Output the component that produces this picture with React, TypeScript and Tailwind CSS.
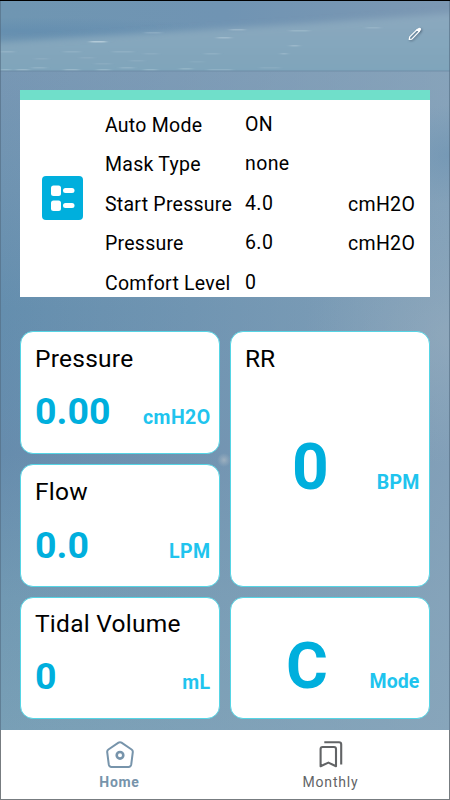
import clsx from 'clsx'

const settings = [
  { label: 'Auto Mode', value: 'ON', unit: '' },
  { label: 'Mask Type', value: 'none', unit: '' },
  { label: 'Start Pressure', value: '4.0', unit: 'cmH2O' },
  { label: 'Pressure', value: '6.0', unit: 'cmH2O' },
  { label: 'Comfort Level', value: '0', unit: '' },
]

const readings = [
  { title: 'Pressure', value: '0.00', unit: 'cmH2O', box: 'h-[123px] pt-[11px]', gap: 'mt-[15px]' },
  { title: 'Flow', value: '0.0', unit: 'LPM', box: 'h-[123px] pt-[11px]', gap: 'mt-4' },
  { title: 'Tidal Volume', value: '0', unit: 'mL', box: 'h-[122px] pt-2.5', gap: 'mt-[15px]' },
]

// x, y, width, opacity of the light streaks in the header
const streaks = [
  [90, 41, 16, 0.8], [145, 32, 16, 0.25], [230, 29, 15, 0.4], [217, 37, 14, 0.45], [290, 30, 19, 0.3],
  [366, 27, 14, 0.25], [290, 45, 9, 0.4], [281, 53, 6, 0.4], [0, 51, 14, 0.25], [64, 51, 16, 0.2],
  [113, 51, 20, 0.2], [144, 53, 14, 0.15], [205, 53, 14, 0.2], [0, 69, 11, 0.35], [16, 69, 13, 0.4],
  [32, 67, 14, 0.25], [64, 69, 15, 0.4], [97, 69, 13, 0.35], [120, 67, 14, 0.25], [144, 69, 13, 0.35],
  [180, 68, 12, 0.3], [208, 69, 24, 0.25], [260, 67, 20, 0.15], [80, 57, 14, 0.15], [130, 60, 14, 0.15],
  [35, 58, 13, 0.15], [190, 61, 14, 0.1], [95, 63, 16, 0.15],
]

function Sky() {
  return (
    <svg className="absolute inset-0 h-full w-full" viewBox="0 0 450 800" preserveAspectRatio="none" aria-hidden="true">
      <defs>
        <linearGradient id="head" x1="0" y1="0" x2="1" y2="0">
          <stop offset="0" stopColor="#6f96b2" />
          <stop offset="0.5" stopColor="#7094b3" />
          <stop offset="1" stopColor="#7c98b3" />
        </linearGradient>
        <linearGradient id="haze" x1="0" y1="0" x2="0" y2="1">
          <stop offset="0" stopColor="#8ca9bf" />
          <stop offset="1" stopColor="#7ba3b9" />
        </linearGradient>
        <linearGradient id="body" x1="0" y1="0" x2="0" y2="1">
          <stop offset="0" stopColor="#7797b4" />
          <stop offset="0.18" stopColor="#6e93b1" />
          <stop offset="0.36" stopColor="#648eae" />
          <stop offset="0.58" stopColor="#668cad" />
          <stop offset="0.8" stopColor="#7199b3" />
          <stop offset="1" stopColor="#789fb6" />
        </linearGradient>
        <linearGradient id="side" x1="0" y1="0" x2="1" y2="0">
          <stop offset="0" stopColor="#94a9bb" stopOpacity="0" />
          <stop offset="0.35" stopColor="#8ca5bb" stopOpacity="0.25" />
          <stop offset="1" stopColor="#8ea8bd" stopOpacity="0.7" />
        </linearGradient>
        <radialGradient id="glow">
          <stop offset="0" stopColor="#a2b3c1" stopOpacity="0.9" />
          <stop offset="1" stopColor="#9bafbf" stopOpacity="0" />
        </radialGradient>
        <radialGradient id="dim">
          <stop offset="0" stopColor="#618caf" stopOpacity="0.7" />
          <stop offset="1" stopColor="#618caf" stopOpacity="0" />
        </radialGradient>
        <filter id="soft" x="-10%" y="-50%" width="120%" height="200%">
          <feGaussianBlur stdDeviation="3" />
        </filter>
        <filter id="streak" x="-5%" y="-10%" width="110%" height="120%">
          <feGaussianBlur stdDeviation="2 0.5" />
        </filter>
        <clipPath id="top">
          <rect width="450" height="71" />
        </clipPath>
      </defs>
      <rect width="450" height="71" fill="url(#head)" />
      <g clipPath="url(#top)">
        <ellipse cx="20" cy="31" rx="210" ry="14" fill="url(#dim)" />
        <path d="M-20 44 L150 33 L300 24 L470 12 V90 H-20Z" fill="url(#haze)" filter="url(#soft)" />
        <g filter="url(#streak)">
          {streaks.map(([x, y, w, o], i) => (
            <rect key={i} x={x} y={y} width={w} height="1.6" rx="0.8" fill="#bed3df" opacity={o} />
          ))}
        </g>
      </g>
      <rect y="71" width="450" height="660" fill="url(#body)" />
      <rect y="71" width="450" height="660" fill="url(#side)" />
      <ellipse cx="455" cy="335" rx="150" ry="130" fill="url(#glow)" opacity="0.45" />
      <ellipse cx="450" cy="155" rx="70" ry="50" fill="url(#dim)" opacity="0.6" />
      <circle cx="224" cy="460" r="7" fill="url(#glow)" />
      <rect y="70.5" width="450" height="1" fill="#64839c" opacity="0.6" />
      <rect width="450" height="1" fill="#000" />
      <rect y="1" width="1" height="799" fill="#526b80" opacity="0.6" />
      <rect x="449" y="1" width="1" height="799" fill="#526b80" opacity="0.6" />
    </svg>
  )
}

function ListIcon() {
  return (
    <svg className="h-11 w-[41px]" viewBox="0 0 41 44" fill="none">
      <rect width="41" height="44" rx="4" fill="#00afdd" />
      <g fill="#fff">
        <rect x="9" y="9.5" width="10" height="10.5" rx="2.5" />
        <rect x="9" y="24.5" width="10" height="10.5" rx="2.5" />
        <rect x="21" y="12" width="11.5" height="5" rx="2.5" />
        <rect x="21" y="27" width="11.5" height="5" rx="2.5" />
      </g>
    </svg>
  )
}

function PencilIcon() {
  return (
    <svg className="h-4 w-4 drop-shadow-[1px_1px_1px_rgba(60,80,100,0.7)]" viewBox="0 0 16 16" fill="none">
      <path d="M2.2 13.5 2.7 10.9 10.3 3.3 12.3 5.3 4.8 13.1Z" stroke="#fff" strokeWidth="1.2" strokeLinejoin="round" />
      <path d="M9.3 3.8 11.6 2Q13 1.4 13.8 2.2T13.8 4.3L12 6.3Z" fill="#fff" />
    </svg>
  )
}

function HomeIcon() {
  return (
    <svg className="h-7 w-7" viewBox="0 0 28 28" fill="none" stroke="#7794ab" strokeWidth="2" strokeLinejoin="round">
      <path d="M12.5 1.7Q14 .7 15.5 1.7L25.6 8.5Q27 9.5 26.8 11.2L25.2 23.7Q24.8 26 22.6 26H5.4Q3.2 26 2.8 23.7L1.2 11.2Q1 9.5 2.4 8.5Z" />
      <circle cx="14" cy="14.3" r="3.3" strokeWidth="2.6" />
    </svg>
  )
}

function MonthlyIcon() {
  return (
    <svg className="h-7 w-7" viewBox="0 0 28 28" fill="none" stroke="#626466" strokeWidth="2.1" strokeLinejoin="round">
      <path d="M3.6 25.2V8Q3.6 6 5.6 6H17Q19 6 19 8V25.2L11.4 21.6Z" />
      <path d="M7.3 1.3H22Q24.2 1.3 24.2 3.5V23.5" />
    </svg>
  )
}

const card = 'rounded-[13px] border border-[#55d5e5] bg-white'

export default function App() {
  return (
    <div className="relative h-[800px] w-[450px] overflow-hidden bg-[#7095b2] font-['Roboto',sans-serif] whitespace-nowrap text-black">
      <Sky />
      <div className="relative flex h-full flex-col">
        <header className="flex h-[90px] justify-end pt-[26px] pr-[27px]">
          <PencilIcon />
        </header>

        {/* Current settings */}
        <section className="mx-5 flex h-[207px] shrink-0 overflow-hidden border-t-[10px] border-[#70dfca] bg-white">
          <div className="w-[85px] pt-[76px] pl-[22px]">
            <ListIcon />
          </div>
          <div className="pt-1.5">
            {settings.map((row) => (
              <div key={row.label} className="grid h-[39.4px] grid-cols-[140px_103px_70px] text-[19.5px] leading-10 tracking-[0.25px]">
                <span>{row.label}</span>
                <span className="-mt-px tracking-[0.4px]">{row.value}</span>
                <span className="tracking-[0.3px]">{row.unit}</span>
              </div>
            ))}
          </div>
        </section>

        {/* Live readings */}
        <main className="mt-[34px] flex flex-1 gap-2.5 px-[19.5px]">
          <div className="flex w-[200px] flex-col gap-2.5">
            {readings.map((item) => (
              <div key={item.title} className={clsx(card, item.box, 'flex shrink-0 flex-col pr-2 pl-[14.5px]')}>
                <h2 className="text-[24.5px] leading-8 tracking-[0.25px]">{item.title}</h2>
                <div className={clsx(item.gap, 'flex items-baseline justify-between font-bold')}>
                  <span className="text-[37.5px] leading-[42px] text-[#00afdd]">{item.value}</span>
                  <span className="text-[19.5px] tracking-[0.4px] text-[#20c4ee]">{item.unit}</span>
                </div>
              </div>
            ))}
          </div>
          <div className="flex w-[200px] flex-col gap-2.5">
            <div className={clsx(card, 'h-64 shrink-0 pr-[9px] pl-[14.5px]')}>
              <h2 className="pt-[11px] text-[24.5px] leading-8">RR</h2>
              <div className="mt-[57px] flex items-baseline justify-between pl-[47px] font-bold">
                <span className="text-[64px] leading-[72px] text-[#00afdd]">0</span>
                <span className="text-[19.5px] tracking-[0.2px] text-[#20c4ee]">BPM</span>
              </div>
            </div>
            <div className={clsx(card, 'h-[122px] shrink-0 pr-[9px] pl-[55.5px]')}>
              <div className="mt-[33px] flex items-baseline justify-between font-bold">
                <span className="text-[64px] leading-[72px] text-[#00afdd]">C</span>
                <span className="text-[19.5px] tracking-[0.1px] text-[#20c4ee]">Mode</span>
              </div>
            </div>
          </div>
        </main>

        {/* Bottom tabs */}
        <nav className="flex h-[70px] shrink-0 border-x border-b border-[#777c80] bg-white px-[13px] text-[14px] tracking-[0.7px]">
          <div className="flex w-[211px] flex-col items-center pt-[11px] font-bold text-[#7794ab]">
            <HomeIcon />
            <span className="mt-[3px] leading-5">Home</span>
          </div>
          <div className="flex w-[211px] flex-col items-center pt-[11px] text-[#626466]">
            <MonthlyIcon />
            <span className="mt-[3px] leading-5 tracking-[0.8px]">Monthly</span>
          </div>
        </nav>
      </div>
    </div>
  )
}
